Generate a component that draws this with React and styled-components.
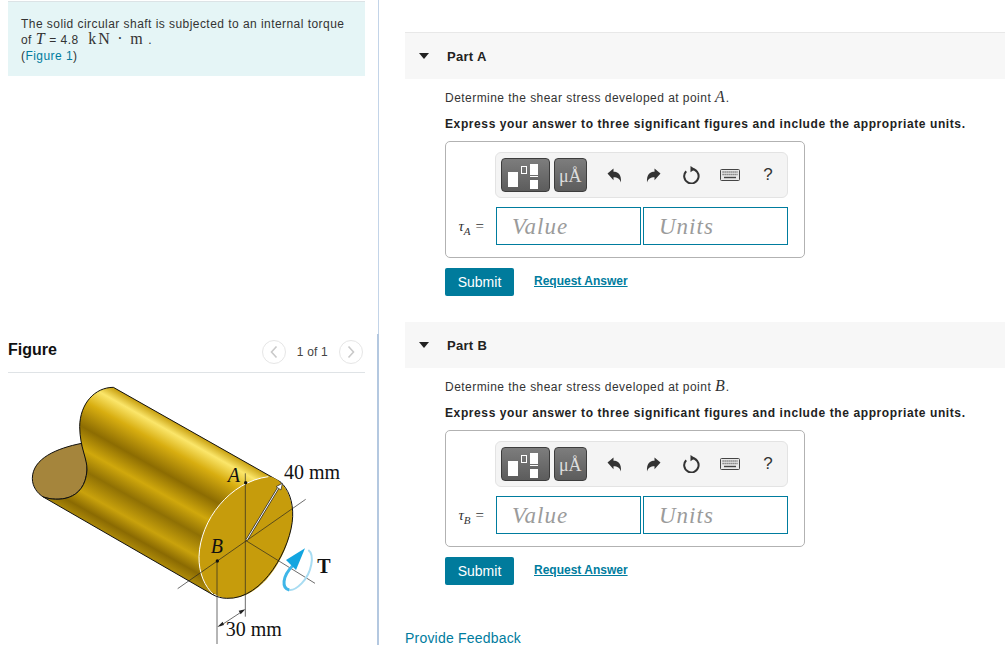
import React from 'react';
import styled, { createGlobalStyle } from 'styled-components';

const GlobalStyle = createGlobalStyle`
  html, body {
    margin: 0;
    padding: 0;
    background: #fff;
    overflow: hidden;
  }
  body {
    font-family: 'Liberation Sans', Arial, sans-serif;
    font-size: 12px;
    color: #222;
  }
`;

const Page = styled.div`
  display: flex;
  width: 1005px;
  height: 645px;
  overflow: hidden;
`;

const LeftColumn = styled.div`
  width: 379px;
  flex-shrink: 0;
`;

const TopPanel = styled.div`
  height: 334px;
  box-sizing: border-box;
  padding: 1px 13px 0 8px;
  border-right: 1px solid #c3d4e8;
`;

const FigurePanel = styled.div`
  height: 311px;
  box-sizing: border-box;
  padding: 0 12px 0 8px;
  border-right: 2px solid #b4c8e0;
`;

const InfoBox = styled.div`
  height: 75px;
  box-sizing: border-box;
  background: #e5f5f6;
  border-top: 1px solid #dce3e6;
  padding: 14px 13px 0;
  line-height: 16px;
  letter-spacing: 0.45px;
  color: #333;
`;

const MathSerif = styled.span`
  font-family: 'Liberation Serif', serif;
  font-size: 16px;
  line-height: 0;
  letter-spacing: ${(p) => p.$spacing || '0.9px'};
  margin: ${(p) => p.$margin || '0'};
`;

const ScriptT = styled(MathSerif)`
  font-style: italic;
`;

const TealLink = styled.a`
  color: #007c9e;
  text-decoration: none;
`;

const FigureHeader = styled.div`
  display: flex;
  align-items: center;
  justify-content: space-between;
  height: 39px;
  border-bottom: 1px solid #dfe3e6;
  box-sizing: border-box;
`;

const FigureTitle = styled.h3`
  margin: 0 0 6px;
  font-size: 16px;
  font-weight: bold;
  color: #111;
`;

const Pager = styled.div`
  display: flex;
  align-items: center;
  gap: 11px;
  margin: 0 2px 2px 0;
  font-size: 12px;
  letter-spacing: 0.2px;
  color: #444;
`;

const PagerButton = styled.span`
  width: 24px;
  height: 24px;
  box-sizing: border-box;
  border: 1px solid #e6e6e6;
  border-radius: 50%;
  display: flex;
  align-items: center;
  justify-content: center;
`;

const FigureImage = styled.svg`
  display: block;
  width: 378px;
  height: 275px;
  margin: -3px 0 0 -8px;
`;

const RightColumn = styled.div`
  flex: 1;
  padding: 32px 0 0 26px;
  min-width: 0;
`;

const PartSection = styled.section`
  height: 289px;
`;

const PartHeader = styled.div`
  display: flex;
  align-items: center;
  height: 47px;
  box-sizing: border-box;
  background: #f7f7f7;
  background-clip: padding-box;
  border-top: 1px solid ${(p) => (p.$first ? '#e8e8e8' : 'transparent')};
  padding: 0 0 0 14px;
  gap: 18px;
  font-weight: bold;
  font-size: 13px;
  letter-spacing: 0.3px;
  color: #222;
`;

const Caret = styled.span`
  width: 0;
  height: 0;
  border-left: 5px solid transparent;
  border-right: 5px solid transparent;
  border-top: 6px solid #222;
`;

const PartBody = styled.div`
  padding: 11px 0 0 40px;
`;

const Prompt = styled.p`
  margin: 0;
  height: 26px;
  line-height: 16px;
  letter-spacing: 0.46px;
  color: #333;
`;

const Instruction = styled(Prompt)`
  font-weight: bold;
  letter-spacing: 0.6px;
  color: #222;
  height: 25px;
`;

const AnswerBox = styled.div`
  width: 360px;
  height: 117px;
  box-sizing: border-box;
  border: 1px solid #b2b2b2;
  border-radius: 5px;
  padding: 10px 16px 0 0;
  display: flex;
  flex-direction: column;
  align-items: flex-end;
  gap: 9px;
`;

const Toolbar = styled.div`
  width: 293px;
  height: 46px;
  box-sizing: border-box;
  background: #f4f4f4;
  border: 1px solid #e3e3e3;
  border-radius: 6px;
  display: flex;
  align-items: center;
  padding-left: 5px;
  gap: 4px;
`;

const TemplateButton = styled.span`
  width: ${(p) => p.$width}px;
  height: 34px;
  box-sizing: border-box;
  border: 1px solid #3d3d3d;
  border-radius: 4px;
  background: linear-gradient(#7d7d7d, #5c5c5c);
  display: flex;
  align-items: center;
  justify-content: center;
  padding-top: 3px;
  color: #ddd;
  font-family: 'Liberation Serif', serif;
  font-size: 18px;
`;

const ToolIcons = styled.div`
  display: flex;
  align-items: center;
  margin-left: 5px;
`;

const ToolIcon = styled.span`
  width: 38.25px;
  display: flex;
  justify-content: center;
  align-items: center;
  font-size: 17px;
  color: #333;
`;

const InputRow = styled.div`
  display: flex;
  align-items: center;
  gap: 2px;
`;

const Label = styled.span`
  font-family: 'Liberation Serif', serif;
  font-size: 15px;
  color: #333;
  width: 51px;
  white-space: nowrap;
  display: flex;
  justify-content: flex-end;
  padding-right: 10px;
  box-sizing: border-box;
  align-items: baseline;
  gap: 5px;
  sub {
    font-size: 11px;
    line-height: 0;
  }
`;

const ValueField = styled.div`
  width: 145px;
  height: 38px;
  box-sizing: border-box;
  border: 1px solid #007c9e;
  padding: 1px 0 0 15px;
  display: flex;
  align-items: center;
  font-family: 'Liberation Serif', serif;
  font-style: italic;
  font-size: 23px;
  letter-spacing: 1px;
  color: #9b9b9b;
`;

const Actions = styled.div`
  display: flex;
  align-items: center;
  margin-top: 10px;
  gap: 20px;
`;

const SubmitButton = styled.button`
  width: 69px;
  height: 28px;
  border: none;
  border-radius: 2px;
  background: #007b9c;
  color: #fff;
  font-family: 'Liberation Sans', Arial, sans-serif;
  font-size: 14px;
  padding: 0;
`;

const RequestLink = styled.a`
  color: #007c9e;
  font-weight: bold;
  font-size: 12px;
  text-decoration: underline;
  margin-bottom: 2px;
`;

const Feedback = styled.a`
  display: block;
  margin-top: 22px;
  color: #007c9e;
  font-size: 14px;
  line-height: 13px;
  letter-spacing: 0.2px;
`;

const Chevron = ({ dir }) => (
  <svg width="10" height="14" viewBox="0 0 10 14">
    <path
      d={dir === 'left' ? 'M7.5 1.5 2.5 7l5 5.5' : 'M2.5 1.5 7.5 7l-5 5.5'}
      fill="none"
      stroke="#c9c9c9"
      strokeWidth="1.6"
    />
  </svg>
);

const FractionIcon = () => (
  <svg width="42" height="28" viewBox="0 0 42 28">
    <rect x="4" y="9" width="10" height="15" fill="#fff" />
    <rect x="17.5" y="3.5" width="5" height="7" fill="none" stroke="#fff" />
    <rect x="26" y="1" width="8" height="11" fill="#fff" />
    <rect x="26" y="13" width="8" height="1" fill="#fff" />
    <rect x="26" y="17" width="8" height="9" fill="#fff" />
  </svg>
);

const Undo = ({ flip }) => (
  <svg width="15" height="15" viewBox="0 0 15 15" style={flip ? { transform: 'scaleX(-1)' } : undefined}>
    <path d="M.5 5.5 6.5.5v3.2c4.5 0 8 2.5 7.5 10.8-1.2-3.8-3.5-5.2-7.5-5.2v3Z" fill="#333" />
  </svg>
);

const Reset = () => (
  <svg width="18" height="18" viewBox="0 0 18 18">
    <path d="M4.2 5.2A7.2 7.2 0 1 0 9.5 3" fill="none" stroke="#333" strokeWidth="2" />
    <path d="M8.5 0 13 3 8.5 6.2Z" fill="#333" />
  </svg>
);

const KeyboardIcon = () => (
  <svg width="20" height="12" viewBox="0 0 20 12">
    <rect x=".5" y=".5" width="19" height="11" rx="1" fill="#e8e8e8" stroke="#444" />
    <path d="M2.5 3h15M2.5 5.5h15" stroke="#666" strokeWidth="1.3" strokeDasharray="1.2 .8" />
    <path d="M4 8.5h12" stroke="#444" strokeWidth="1.4" />
  </svg>
);

const ShaftFigure = () => (
  <FigureImage viewBox="0 0 1134 825">
    <defs>
      <linearGradient id="shaftGold" gradientUnits="userSpaceOnUse" x1="590" y1="194" x2="400" y2="532">
        <stop offset="0" stopColor="#c8a010" />
        <stop offset="0.08" stopColor="#fbe66a" />
        <stop offset="0.2" stopColor="#d8ae10" />
        <stop offset="0.38" stopColor="#8c6c02" />
        <stop offset="0.53" stopColor="#d0a80c" />
        <stop offset="0.67" stopColor="#8f7004" />
        <stop offset="0.82" stopColor="#c9a20c" />
        <stop offset="0.93" stopColor="#8a6a02" />
        <stop offset="1" stopColor="#a98608" />
      </linearGradient>
    </defs>
    <path
      d="M245 220C170 235 98 265 97 325 97 350 112 370 130 381 170 395 255 395 261 300 262 270 250 245 245 220Z"
      fill="#a5853c"
      stroke="#111"
      strokeWidth="3"
    />
    <path
      d="M340 52 840 335 640 675 130 381C170 395 255 395 261 300 262 265 240 235 239 170 240 100 285 52 340 52Z"
      fill="url(#shaftGold)"
      stroke="#111"
      strokeWidth="3"
      strokeLinejoin="round"
    />
    <path
      d="M805 320C840 320 880 370 878 440 875 530 800 690 680 685 625 680 595 620 597 560 600 450 690 335 805 320Z"
      fill="#c69c0c"
    />
    <path
      d="M840 335C865 355 880 395 878 440 875 530 790 690 680 685 665 685 650 680 640 675"
      fill="none"
      stroke="#111"
      strokeWidth="3"
    />
    <path d="M805 320C690 335 600 450 597 560 596 610 615 650 640 673" fill="none" stroke="#fff" strokeWidth="3" />
    <g stroke="#222" strokeWidth="2" fill="none">
      <path d="M533 656 917 388" />
      <path d="M736 310V740" />
      <path d="M738 512 945 640" />
      <path d="M651 575V822" />
      <path d="M660 768 730 722" />
    </g>
    <path d="M652 771 668 755 672 765ZM736 718 716 722 722 733Z" fill="#222" />
    <path d="M740 510 840 345" stroke="#333" strokeWidth="7" />
    <path d="M740 510 840 345" stroke="#fff" strokeWidth="3" />
    <path d="M847 340 828 350 843 360Z" fill="#fff" stroke="#222" strokeWidth="2" />
    <circle cx="737" cy="338" r="5" fill="#111" />
    <circle cx="652" cy="573" r="5" fill="#111" />
    <path
      d="M925 540C945 555 935 610 905 640 890 655 880 662 868 660"
      fill="none"
      stroke="#a8dcf2"
      strokeWidth="6"
    />
    <path d="M868 660C845 655 845 620 880 585" fill="none" stroke="#3fb6e8" strokeWidth="9" />
    <path d="M915 535 858 570 888 600Z" fill="#12a5e0" />
    <g fontFamily="'Liberation Serif', serif" fontSize="60" fill="#111">
      <text x="852" y="327">40 mm</text>
      <text x="677" y="797">30 mm</text>
      <text x="683" y="335" fontStyle="italic">A</text>
      <text x="632" y="550" fontStyle="italic">B</text>
      <text x="952" y="609" fontWeight="bold">T</text>
    </g>
  </FigureImage>
);

const Part = ({ name, point, first }) => (
  <PartSection>
    <PartHeader $first={first}>
      <Caret />
      <span>{name}</span>
    </PartHeader>
    <PartBody>
      <Prompt>
        Determine the shear stress developed at point <MathSerif as="i">{point}</MathSerif>.
      </Prompt>
      <Instruction>Express your answer to three significant figures and include the appropriate units.</Instruction>
      <AnswerBox>
        <Toolbar>
          <TemplateButton $width={50}>
            <FractionIcon />
          </TemplateButton>
          <TemplateButton $width={34}>μÅ</TemplateButton>
          <ToolIcons>
            <ToolIcon><Undo /></ToolIcon>
            <ToolIcon><Undo flip /></ToolIcon>
            <ToolIcon><Reset /></ToolIcon>
            <ToolIcon><KeyboardIcon /></ToolIcon>
            <ToolIcon>?</ToolIcon>
          </ToolIcons>
        </Toolbar>
        <InputRow>
          <Label>
            <i>τ<sub>{point}</sub></i> =
          </Label>
          <ValueField>Value</ValueField>
          <ValueField>Units</ValueField>
        </InputRow>
      </AnswerBox>
      <Actions>
        <SubmitButton>Submit</SubmitButton>
        <RequestLink href="#">Request Answer</RequestLink>
      </Actions>
    </PartBody>
  </PartSection>
);

export default function App() {
  return (
    <>
      <GlobalStyle />
      <Page>
        <LeftColumn>
          <TopPanel>
            <InfoBox>
              The solid circular shaft is subjected to an internal torque
              <br />
              of <ScriptT>T</ScriptT> = 4.8 <MathSerif $margin="0 0 0 6px" $spacing="1.8px">kN · m</MathSerif> .
              <br />
              (<TealLink href="#">Figure 1</TealLink>)
            </InfoBox>
          </TopPanel>
          <FigurePanel>
            <FigureHeader>
              <FigureTitle>Figure</FigureTitle>
              <Pager>
                <PagerButton><Chevron dir="left" /></PagerButton>
                <span>1 of 1</span>
                <PagerButton><Chevron dir="right" /></PagerButton>
              </Pager>
            </FigureHeader>
            <ShaftFigure />
          </FigurePanel>
        </LeftColumn>
        <RightColumn>
          <Part name="Part A" point="A" first />
          <Part name="Part B" point="B" />
          <Feedback>Provide Feedback</Feedback>
        </RightColumn>
      </Page>
    </>
  );
}
